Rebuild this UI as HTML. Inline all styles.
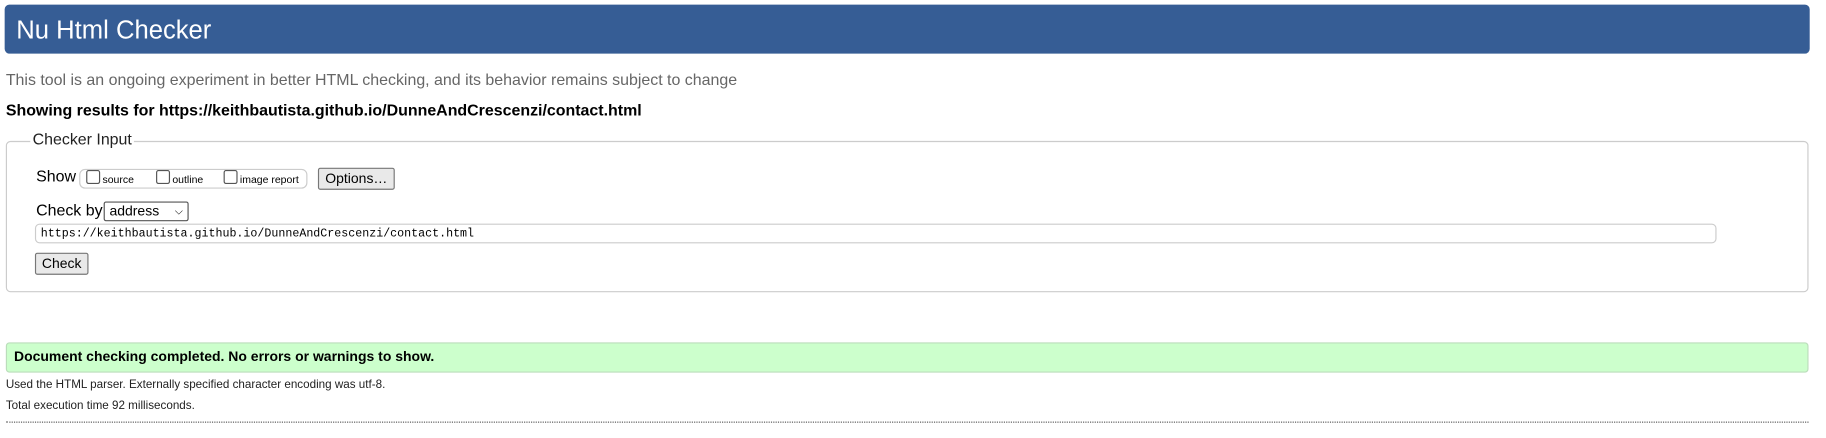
<!DOCTYPE html>
<html><head><style>
body{margin:0;width:1826px;height:438px;background:#fff;font-family:"Liberation Sans",sans-serif;position:relative;overflow:hidden}
#w{position:absolute;left:0;top:0;width:1568px;height:376px;transform:scale(1.16454);transform-origin:0 0}
.a{position:absolute;white-space:nowrap}
.hdr{left:4px;top:4px;width:1550px;height:42px;background:#365d95;border-radius:4px}
.hdr span{position:absolute;left:10px;top:9px;color:#fff;font-size:22px}
.btn{position:absolute;background:#e9e9e9;border:1px solid #777;border-radius:2px;font-size:12px;text-align:center;box-sizing:border-box}
.cb{display:inline-block;width:10px;height:10px;border:1px solid #555;border-radius:2px;vertical-align:-1px;margin-right:2px;background:#fff}
</style></head><body><div id="w">
<div class="a hdr"><span>Nu Html Checker</span></div>
<div class="a" style="left:5px;top:61px;font-size:13.7px;color:#666">This tool is an ongoing experiment in better HTML checking, and its behavior remains subject to change</div>
<div class="a" style="left:5px;top:87px;font-size:13.7px;font-weight:bold;color:#000">Showing results for https://keithbautista.github.io/DunneAndCrescenzi/contact.html</div>
<div class="a" style="left:5px;top:121px;width:1546px;height:128px;border:1px solid #ccc;border-radius:4px"></div>
<div class="a" style="left:26px;top:112px;font-size:13.7px;background:#fff;padding:0 2px;color:#222">Checker Input</div>
<div class="a" style="left:31px;top:144px;font-size:13.7px">Show</div>
<div class="a" style="left:68px;top:145px;width:194px;height:15px;border:1px solid #ccc;border-radius:5px;font-size:9px;line-height:15px">
<span style="position:absolute;left:5px;top:0"><span class="cb"></span>source</span>
<span style="position:absolute;left:65px;top:0"><span class="cb"></span>outline</span>
<span style="position:absolute;left:123px;top:0"><span class="cb"></span>image report</span>
</div>
<div class="btn" style="left:273px;top:144px;width:66px;height:19px;line-height:17px">Options…</div>
<div class="a" style="left:31px;top:173px;font-size:13.7px">Check by</div>
<div class="a" style="left:89px;top:173px;height:15px;border:1px solid #555;border-radius:2px;font-size:12px;line-height:15px;padding-left:4px;width:67px">address<span style="position:absolute;right:4px;top:0;font-size:9px">&#9013;</span></div>
<div class="a" style="left:30px;top:192px;height:17px;border:1px solid #ccc;border-radius:4px;font-family:'Liberation Mono',monospace;font-size:10px;line-height:17px;padding-left:4px;box-sizing:border-box;width:1444px">https://keithbautista.github.io/DunneAndCrescenzi/contact.html</div>
<div class="btn" style="left:30px;top:217px;width:46px;height:19px;line-height:17px">Check</div>
<div class="a" style="left:5px;top:294px;width:1546px;height:24px;background:#ccffcc;border:1px solid #bdb;border-radius:3px"></div>
<div class="a" style="left:12px;top:299px;font-size:12px;font-weight:bold;line-height:15px">Document checking completed. No errors or warnings to show.</div>
<div class="a" style="left:5px;top:325px;font-size:10px;color:#222">Used the HTML parser. Externally specified character encoding was utf-8.</div>
<div class="a" style="left:5px;top:343px;font-size:10px;color:#222">Total execution time 92 milliseconds.</div>
<div class="a" style="left:5px;top:362px;width:1548px;border-top:1px dotted #555"></div>
</div></body></html>
